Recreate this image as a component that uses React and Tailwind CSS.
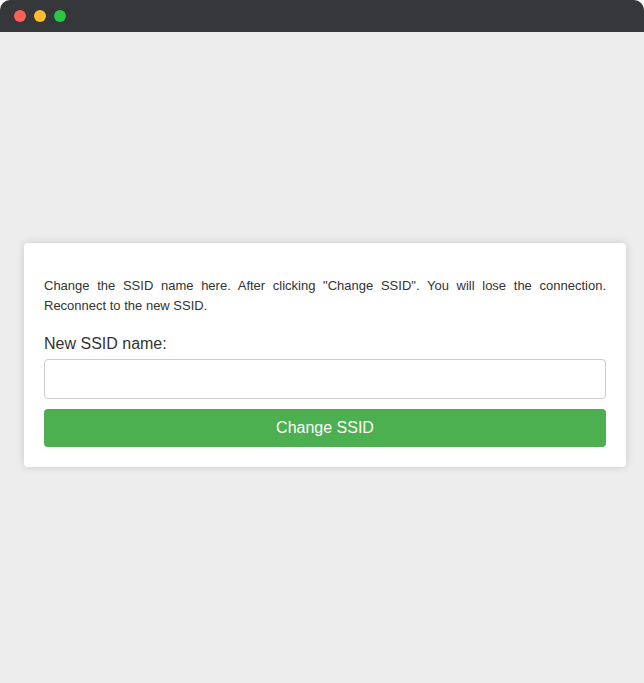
import React, { useState } from 'react';

const App = () => {
  const [ssid, setSsid] = useState('');

  return (
    <div className="h-[683px] w-[644px] flex flex-col bg-[#ededed] rounded-t-[10px] overflow-hidden font-['Liberation_Sans',Arial,sans-serif]">
      {/* Title bar */}
      <div className="h-[32px] bg-[#36373a] flex items-center gap-[8px] px-[14px] shrink-0">
        <span className="w-[12px] h-[12px] rounded-full bg-[#fe5f57]" />
        <span className="w-[12px] h-[12px] rounded-full bg-[#febc2e]" />
        <span className="w-[12px] h-[12px] rounded-full bg-[#28c840]" />
      </div>

      {/* Content */}
      <div className="flex-1 flex items-center pb-[6px]">
        <div className="ml-[24px] w-[602px] bg-white rounded-[4px] shadow-[0_0_8px_rgba(0,0,0,0.15)] px-[20px] pt-[20px] pb-[20px]">
          <p className="mt-[13px] mb-[18px] text-[13px] leading-[20px] text-[#333] text-justify">
            Change the SSID name here. After clicking "Change SSID". You will lose the connection. Reconnect to the new SSID.
          </p>
          <label className="block text-[16px] leading-[19px] text-[#333] mb-[6px]">New SSID name:</label>
          <input
            type="text"
            value={ssid}
            onChange={(e) => setSsid(e.target.value)}
            className="block w-full h-[40px] border border-[#ccc] rounded-[4px] px-[10px] text-[16px] outline-none"
          />
          <button className="mt-[10px] w-full h-[38px] bg-[#4caf50] text-white text-[16px] rounded-[4px]">
            Change SSID
          </button>
        </div>
      </div>
    </div>
  );
};

export default App;
